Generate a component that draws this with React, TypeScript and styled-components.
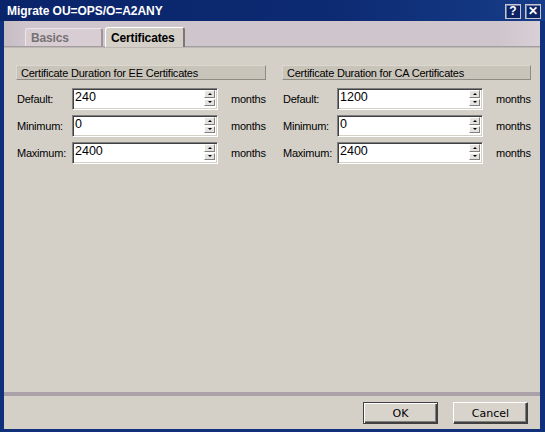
import React from "react";
import styled, { createGlobalStyle } from "styled-components";

const Global = createGlobalStyle`
  html, body { margin: 0; padding: 0; background: #0e2a75; }
  body { font-family: "Liberation Sans", Arial, sans-serif; }
  * { box-sizing: border-box; }
`;

const Window = styled.div`
  width: 545px;
  height: 432px;
  display: flex;
  flex-direction: column;
  background: #10307c;
  overflow: hidden;
`;

const TitleBar = styled.div`
  height: 21px;
  flex: none;
  display: flex;
  align-items: center;
  padding: 0 4px 0 7px;
  background: linear-gradient(to right, #0a246a 0%, #0c2a72 60%, #173c88 100%);
`;

const Title = styled.div`
  flex: 1;
  color: #ffffff;
  font-weight: bold;
  font-size: 12px;
  letter-spacing: -0.05px;
  padding-top: 1px;
`;

const CaptionButtons = styled.div`
  display: flex;
  gap: 4px;
  margin-top: 1px;
`;

const CaptionButton = styled.div`
  width: 16px;
  height: 15px;
  background: #0c2466;
  border: 1px solid #c8c4d0;
  box-shadow: inset 1px 1px 0 #6f7fa8;
  color: #ffffff;
  font-weight: bold;
  font-size: 12px;
  display: flex;
  align-items: center;
  justify-content: center;
  line-height: 1;
`;

const Frame = styled.div`
  flex: 1;
  margin: 0 5px 3px 4px;
  display: flex;
  flex-direction: column;
  background: #d4d0c8;
`;

const TabStrip = styled.div`
  height: 26px;
  flex: none;
  display: flex;
  align-items: flex-end;
  padding-left: 21px;
  background: linear-gradient(to right, #c6bcc3 0%, #cfc5cc 4%, #cfc5cc 92%, #d8d0d6 100%);
  border-bottom: 1px solid #a39ea0;
  box-shadow: 0 1px 0 #bdb8b4;
  position: relative;
`;

const Tab = styled.div<{ $active?: boolean }>`
  height: ${(p) => (p.$active ? "20px" : "18px")};
  margin-bottom: ${(p) => (p.$active ? "-1px" : "0")};
  width: ${(p) => (p.$active ? "80px" : "78px")};
  margin-right: 2px;
  padding-left: ${(p) => (p.$active ? "5px" : "5px")};
  display: flex;
  align-items: center;
  font-weight: bold;
  font-size: 12px;
  letter-spacing: -0.15px;
  color: ${(p) => (p.$active ? "#000000" : "#767274")};
  background: ${(p) => (p.$active ? "#d4d0c8" : "#d8cdd3")};
  border-top: 1px solid ${(p) => (p.$active ? "#ffffff" : "#ece6ea")};
  border-left: 1px solid ${(p) => (p.$active ? "#ffffff" : "#ece6ea")};
  border-right: 2px solid ${(p) => (p.$active ? "#7a7876" : "#9c959a")};
  border-radius: 3px 3px 0 0;
  position: relative;
  z-index: ${(p) => (p.$active ? 1 : 0)};
`;

const Content = styled.div`
  flex: 1;
  display: grid;
  grid-template-columns: 250px 249px;
  column-gap: 16px;
  align-content: start;
  padding: 18px 9px 0 12px;
`;

const Column = styled.div`
  display: flex;
  flex-direction: column;
`;

const SectionHeader = styled.div`
  height: 15px;
  background: #c9c4ba;
  border-top: 1px solid #dcd8d0;
  border-left: 1px solid #dcd8d0;
  border-right: 1px solid #8e8a84;
  border-bottom: 1px solid #8e8a84;
  font-size: 11px;
  letter-spacing: -0.22px;
  color: #000;
  padding-left: 4px;
  display: flex;
  align-items: center;
  margin-bottom: 8px;
`;

const Rows = styled.div`
  display: flex;
  flex-direction: column;
  gap: 5px;
`;

const Row = styled.div<{ $labelWidth: number }>`
  display: grid;
  grid-template-columns: ${(p) => p.$labelWidth}px 146px auto;
  align-items: center;
  column-gap: 0;
`;

const Label = styled.div`
  font-size: 11px;
  letter-spacing: -0.22px;
  color: #000;
  padding-left: 1px;
`;

const Unit = styled.div`
  font-size: 11px;
  letter-spacing: -0.22px;
  color: #000;
  padding-left: 13px;
`;

const SpinBox = styled.div`
  height: 22px;
  display: flex;
  background: #ffffff;
  border-top: 1px solid #808080;
  border-left: 1px solid #808080;
  border-right: 1px solid #ffffff;
  border-bottom: 1px solid #ffffff;
  box-shadow: inset 1px 1px 0 #404040, inset -1px -1px 0 #d4d0c8;
`;

const Value = styled.div`
  flex: 1;
  font-size: 12.5px;
  padding: 2px 0 0 2px;
  color: #000;
  line-height: 13px;
`;

const Spinner = styled.div`
  width: 13px;
  display: flex;
  flex-direction: column;
  gap: 1px;
  padding: 1px 2px 3px 0;
`;

const SpinButton = styled.div`
  flex: 1;
  background: #e6e3de;
  border-top: 1px solid #ffffff;
  border-left: 1px solid #ffffff;
  border-right: 1px solid #808080;
  border-bottom: 1px solid #808080;
  display: flex;
  align-items: center;
  justify-content: center;
`;

const Arrow = styled.div<{ $down?: boolean }>`
  width: 0;
  height: 0;
  border-left: 2px solid transparent;
  border-right: 2px solid transparent;
  ${(p) =>
    p.$down
      ? "border-top: 2px solid #000;"
      : "border-bottom: 2px solid #000;"}
`;

const Footer = styled.div`
  flex: none;
  height: 37px;
  border-top: 4px solid #aaa1a9;
  display: flex;
  justify-content: flex-end;
  align-items: flex-start;
  gap: 15px;
  padding: 6px 12px 0 0;
`;

const Button = styled.button<{ $default?: boolean }>`
  width: 75px;
  height: 22px;
  font-family: "DejaVu Sans", "Liberation Sans", sans-serif;
  font-size: 11px;
  color: #000;
  background: #d8d4cc;
  border: 1px solid ${(p) => (p.$default ? "#404040" : "#ffffff")};
  box-shadow: ${(p) =>
    p.$default
      ? "inset 1px 1px 0 #ffffff, inset -1px -1px 0 #404040, inset -2px -2px 0 #808080"
      : "inset -1px -1px 0 #404040, inset -2px -2px 0 #808080"};
  border-right-color: #404040;
  border-bottom-color: #404040;
  padding: 0;
`;

type Field = { label: string; value: string };

const Section: React.FC<{ title: string; fields: Field[]; labelWidth: number }> = ({
  title,
  fields,
  labelWidth,
}) => (
  <Column>
    <SectionHeader>{title}</SectionHeader>
    <Rows>
      {fields.map((f) => (
        <Row key={f.label} $labelWidth={labelWidth}>
          <Label>{f.label}</Label>
          <SpinBox>
            <Value>{f.value}</Value>
            <Spinner>
              <SpinButton>
                <Arrow />
              </SpinButton>
              <SpinButton>
                <Arrow $down />
              </SpinButton>
            </Spinner>
          </SpinBox>
          <Unit>months</Unit>
        </Row>
      ))}
    </Rows>
  </Column>
);

export default function App() {
  return (
    <>
      <Global />
      <Window>
        <TitleBar>
          <Title>Migrate OU=OPS/O=A2ANY</Title>
          <CaptionButtons>
            <CaptionButton>?</CaptionButton>
            <CaptionButton>✕</CaptionButton>
          </CaptionButtons>
        </TitleBar>
        <Frame>
          <TabStrip>
            <Tab>Basics</Tab>
            <Tab $active>Certificates</Tab>
          </TabStrip>
          <Content>
            <Section
              title="Certificate Duration for EE Certificates"
              labelWidth={56}
              fields={[
                { label: "Default:", value: "240" },
                { label: "Minimum:", value: "0" },
                { label: "Maximum:", value: "2400" },
              ]}
            />
            <Section
              title="Certificate Duration for CA Certificates"
              labelWidth={55}
              fields={[
                { label: "Default:", value: "1200" },
                { label: "Minimum:", value: "0" },
                { label: "Maximum:", value: "2400" },
              ]}
            />
          </Content>
          <Footer>
            <Button $default>OK</Button>
            <Button>Cancel</Button>
          </Footer>
        </Frame>
      </Window>
    </>
  );
}
